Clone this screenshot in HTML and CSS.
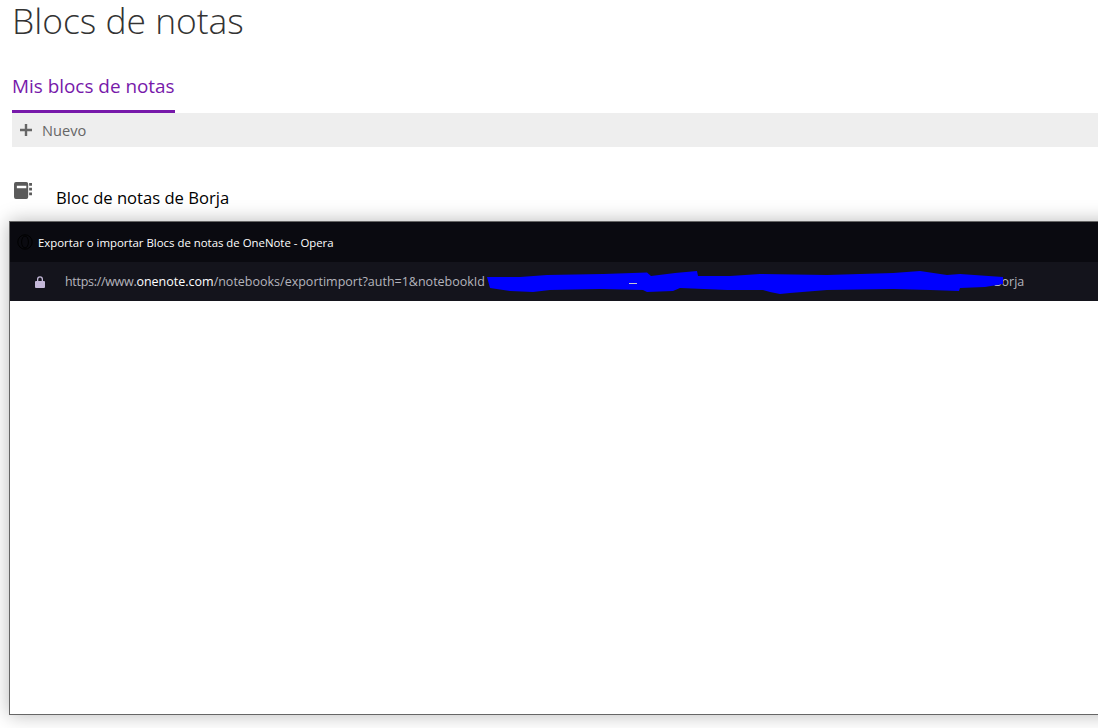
FILE: index.html
```html
<!DOCTYPE html>
<html lang="es">
<head>
<meta charset="utf-8">
<title>Blocs de notas</title>
<link rel="stylesheet" href="styles.css">
</head>
<body>
<main class="page">
  <h1 class="title">Blocs de notas</h1>
  <nav class="tabs"><a class="tab">Mis blocs de notas</a></nav>
  <div class="toolbar">
    <svg class="plus" viewBox="0 0 12 12" width="12" height="12"><path d="M4.800 0h2.400v4.800H12v2.400H7.200V12H4.800V7.200H0V4.800h4.800z"/></svg>
    <span>Nuevo</span>
  </div>
  <div class="notebook">
    <svg class="nb-icon" viewBox="0 0 19 18" width="18" height="17">
      <path fill-rule="evenodd" d="M2 0h11a2 2 0 0 1 2 2v14a2 2 0 0 1-2 2H2a2 2 0 0 1-2-2V2a2 2 0 0 1 2-2zM3 4v2.500h10V4z"/>
      <path d="M16 1h3v3h-3zM16 6h3v3h-3zM16 11h3v3h-3z"/>
    </svg>
    <span class="nb-name">Bloc de notas de Borja</span>
  </div>
</main>
<section class="popup">
  <header class="popup-title">
    <svg class="opera" viewBox="0 0 16 16" width="16" height="16"><circle cx="8" cy="8" r="7.200"/><ellipse cx="8" cy="8" rx="3.400" ry="6"/></svg>
    <span>Exportar o importar Blocs de notas de OneNote - Opera</span>
  </header>
  <div class="popup-url">
    <svg class="lock" viewBox="0 0 10 12" width="10" height="12"><path d="M2 5V3.300a3 3 0 0 1 6 0V5h1a1 1 0 0 1 1 1v5a1 1 0 0 1-1 1H1a1 1 0 0 1-1-1V6a1 1 0 0 1 1-1zm1.300 0h3.400V3.300a1.700 1.700 0 0 0-3.400 0z"/></svg>
    <span class="url"><span class="scheme">https://www.</span><b>onenote.com</b>/notebooks/exportimport?auth=1&amp;notebookId</span>
    <span class="url url-end">Borja</span>
    <svg class="redact" viewBox="480 262 530 39" width="530" height="39"><path d="M487 277L520 277 547 275 603 274 647 272.500 651 276 675 273 697 271 698 276 730 276 760 274 827 275 893 273 920 271 947 275 960 274 1003 277 1003 284 985 287 960 288 959 291 930 290 893 289 827 290 790 293 780 294 770 292 763 290 727 290 680 288 673 291 647 292 643 290 600 289 550 290 533 292 510 291 490 288z"/><rect class="speck" x="629" y="283" width="8" height="1"/></svg>
  </div>
  <div class="popup-body"></div>
</section>
</body>
</html>
```

FILE: styles.css
```css
html, body {
  margin: 0;
  height: 100%;
  overflow: hidden;
  background: #fff;
}

body {
  position: relative;
  width: 1098px;
  height: 728px;
  font-family: "Open Sans", "Liberation Sans", sans-serif;
}

.page {
  padding-left: 12px;
}

.title {
  margin: 0;
  height: 71px;
  font-size: 35.400px;
  line-height: 41px;
  font-weight: 300;
  color: #333;
}

.tabs {
  display: flex;
}

.tab {
  height: 37px;
  padding-top: 2px;
  border-bottom: 3px solid #7719aa;
  font-size: 18.900px;
  line-height: 26px;
  color: #7719aa;
}

.toolbar {
  display: flex;
  align-items: center;
  height: 34px;
  background: #eee;
  color: #666;
  font-size: 14.600px;
}

.plus {
  margin-left: 8px;
  margin-right: 10px;
  fill: #666;
}

.notebook {
  position: relative;
  display: flex;
  padding-top: 35px;
  padding-left: 2px;
}

.nb-icon {
  fill: #5a5a5a;
}

.nb-name {
  margin-left: 24px;
  margin-top: 4px;
  font-size: 16.600px;
  line-height: 24px;
  color: #000;
}

.popup {
  position: absolute;
  left: 9px;
  top: 221px;
  width: 1200px;
  height: 492px;
  display: flex;
  flex-direction: column;
  border: 1px solid #666;
  background: #fff;
  box-shadow: 0 0 18px rgba(0, 0, 0, .28);
}

.popup-title {
  display: flex;
  align-items: center;
  height: 40px;
  background: #0a0a10;
  color: #fff;
  font-size: 11.400px;
}

.opera {
  margin-left: 7px;
  margin-right: 5px;
  fill: none;
  stroke: #000;
  stroke-width: 1;
}

.popup-url {
  position: relative;
  display: flex;
  align-items: center;
  height: 39px;
  background: #14141c;
  color: #b4b4bc;
  font-size: 12.500px;
}

.lock {
  margin-left: 25px;
  margin-right: 20px;
  fill: #c4b8d8;
}

.scheme {
  letter-spacing: -.3px;
}

.url b {
  font-weight: 400;
  color: #fff;
}

.url-end {
  margin-left: 508.500px;
}

.redact {
  position: absolute;
  left: 470px;
  top: 0;
  fill: #0000fe;
}

.speck {
  fill: #c8c8d0;
}

.popup-body {
  flex: 1;
}
```
